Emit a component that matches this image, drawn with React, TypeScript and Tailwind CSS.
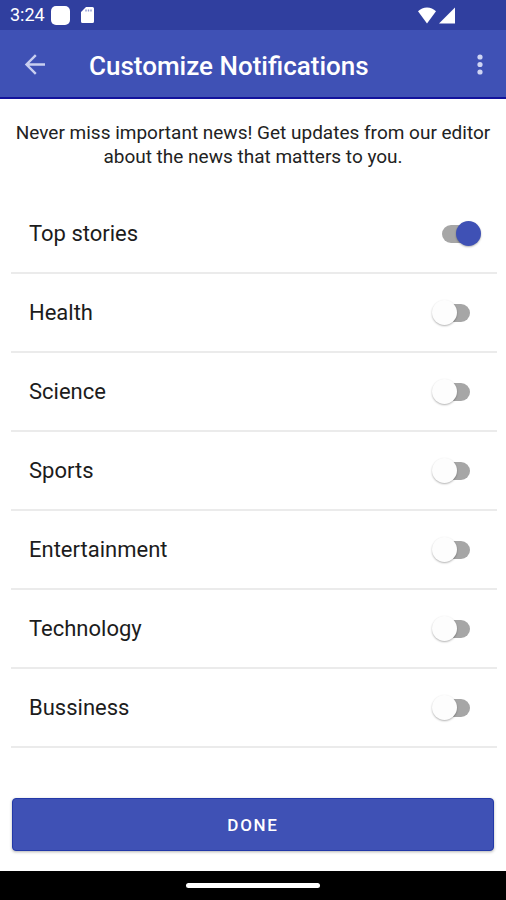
import { useState } from "react";

const topics = [
  "Top stories",
  "Health",
  "Science",
  "Sports",
  "Entertainment",
  "Technology",
  "Bussiness"
];

function StatusBar() {
  return (
    <div className="flex h-[30px] items-center justify-between bg-[#303f9f] pl-2.5 pr-[51px] text-white">
      <div className="flex items-center">
        <span className="text-[18px] leading-5">3:24</span>
        <span className="ml-1.5 size-[19px] rounded-[5px] bg-white" />
        <svg className="ml-2.5 h-[18px] w-[14px]" viewBox="0 0 14 18" aria-hidden="true">
          <path d="M6 1h6.5A1.5 1.5 0 0 1 14 2.500v13a1.500 1.500 0 0 1-1.500 1.500h-10A1.500 1.500 0 0 1 1 15.500V6z" fill="#fff" />
          <path d="M6 3.500v2M8.500 3.500v2M11 3.500v2" stroke="#8f98cf" strokeWidth="1.400" />
        </svg>
      </div>
      <div className="flex items-center gap-px">
        <svg className="h-[18px] w-5" viewBox="0 0 20 18" aria-hidden="true">
          <path d="M10 17.500 1 5.300C3.500 2.800 6.500 1.500 10 1.500s6.500 1.300 9 3.800z" fill="#fff" />
        </svg>
        <svg className="h-[18px] w-[17px]" viewBox="0 0 17 18" aria-hidden="true">
          <path d="M17 1.500v16H1z" fill="#fff" />
        </svg>
      </div>
    </div>
  );
}

function Toolbar() {
  return (
    <header className="flex h-[69px] items-center border-b-2 border-[#12129c] bg-[#3f51b5] pl-[22px] pr-3 pt-1 text-white">
      <button type="button" aria-label="Back" className="-mt-1">
        <svg className="size-[26px]" viewBox="0 0 26 26" fill="none" stroke="#c9cff0" strokeWidth="2.400" aria-hidden="true">
          <path d="M23 13.500H5M13.800 4.200 4.500 13.500l9.300 9.300" />
        </svg>
      </button>
      <h1 className="ml-[41px] flex-1 text-[26px] font-medium leading-8">Customize Notifications</h1>
      <button type="button" aria-label="More options" className="-mt-1">
        <svg className="h-6 w-7" viewBox="0 0 28 24" fill="#cfd5f3" aria-hidden="true">
          <circle cx="14" cy="5" r="2.600" />
          <circle cx="14" cy="12.500" r="2.600" />
          <circle cx="14" cy="20" r="2.600" />
        </svg>
      </button>
    </header>
  );
}

type TopicRowProps = {
  name: string;
  checked: boolean;
  onToggle: () => void;
};

function TopicRow({ name, checked, onToggle }: TopicRowProps) {
  return (
    <li className="border-b-2 border-[#ebebeb]">
      <label className="flex h-[77px] cursor-pointer items-center justify-between pl-[18px] pr-[27px]">
        <span className="text-[22px] leading-7 text-[#1c1c1c]">{name}</span>
        <input
          type="checkbox"
          role="switch"
          checked={checked}
          onChange={onToggle}
          className="relative h-[18px] w-7 cursor-pointer appearance-none rounded-full bg-[#a6a6a6] before:absolute before:-left-[10px] before:-top-[4px] before:size-[25px] before:rounded-full before:bg-[#fdfdfd] before:shadow-[0_1px_2px_rgba(0,0,0,0.3)] checked:before:left-[14px] checked:before:bg-[#3f51b5]"
        />
      </label>
    </li>
  );
}

export default function App() {
  const [enabled, setEnabled] = useState<string[]>(["Top stories"]);

  const toggle = (name: string) => {
    setEnabled((current) =>
      current.includes(name) ? current.filter((item) => item !== name) : [...current, name]
    );
  };

  return (
    <div className="flex min-h-screen flex-col bg-white font-['Roboto',sans-serif]">
      <StatusBar />
      <Toolbar />

      <main className="flex flex-1 flex-col pb-5 pt-[22px]">
        <p className="px-1 text-center text-[19px] leading-6 text-[#222]">
          Never miss important news! Get updates from our editor about the news that matters to you.
        </p>

        <ul className="ml-[11px] mr-[9px] mt-[26px]">
          {topics.map((name) => (
            <TopicRow
              key={name}
              name={name}
              checked={enabled.includes(name)}
              onToggle={() => toggle(name)}
            />
          ))}
        </ul>

        <button
          type="button"
          className="mx-3 mt-auto h-[53px] rounded border border-[#2339a8] bg-[#3f51b5] pt-0.5 text-[17px] font-medium tracking-widest text-white shadow-[0_1px_3px_rgba(0,0,0,0.3)]"
        >
          DONE
        </button>
      </main>

      <footer className="flex h-[29px] items-center justify-center bg-black">
        <span className="h-[5px] w-[134px] rounded-sm bg-white" />
      </footer>
    </div>
  );
}
